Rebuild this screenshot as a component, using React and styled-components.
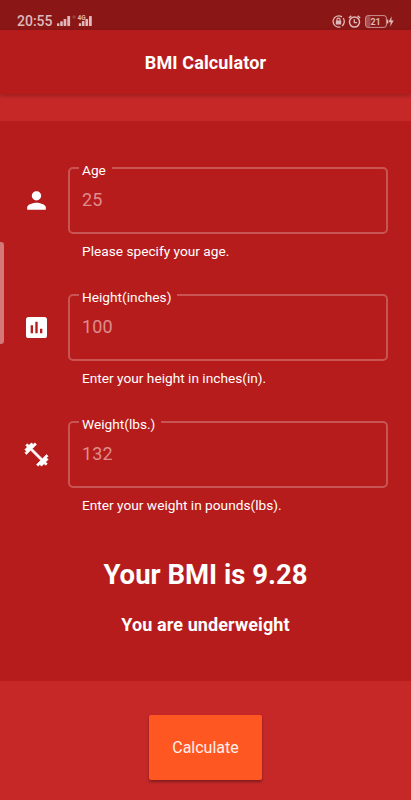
import React from 'react'
import styled, { createGlobalStyle } from 'styled-components'
import { MdPerson, MdAssessment } from 'react-icons/md'

const GlobalStyle = createGlobalStyle`
    * {
        box-sizing: border-box;
    }

    body {
        margin: 0;
        background: #c62828;
        color: #fff;
        font-family: Roboto, sans-serif;
    }
`

const Screen = styled.div`
    position: relative;
    display: flex;
    flex-direction: column;
    width: 411px;
    height: 800px;
    overflow: hidden;
    background: #c62828;
`

const StatusBar = styled.div`
    display: flex;
    justify-content: space-between;
    height: 30px;
    padding: 12px 16px 0 17px;
    background: #8a1616;
    color: #dfb9b9;
`

const StatusGroup = styled.div`
    display: flex;
    align-items: center;
    height: 18px;
`

const Clock = styled.span`
    width: 40px;
    font-size: 14px;
    font-weight: 500;
    line-height: 18px;
`

const AppBar = styled.header`
    display: flex;
    flex: none;
    align-items: center;
    justify-content: center;
    height: 64px;
    padding-top: 1px;
    background: #b71c1c;
    box-shadow: 0 2px 4px rgba(0, 0, 0, 0.22);
`

const Title = styled.h1`
    margin: 0;
    font-size: 18px;
    font-weight: 700;
    line-height: 25px;
    letter-spacing: 0.13px;
`

const Panel = styled.main`
    display: flex;
    flex: none;
    flex-direction: column;
    height: 560px;
    margin-top: 27px;
    padding: 38px 23px 0 0;
    background: #b71c1c;
`

const Row = styled.div`
    display: flex;
    height: 127px;
`

const RowIcon = styled.div`
    display: flex;
    flex: none;
    justify-content: center;
    width: 68px;
    padding: 27px 0 0 4px;

    svg {
        transform: translate(0.5px, 0.5px);
    }
`

const Field = styled.div`
    flex: 1;
`

const Outline = styled.fieldset`
    height: 75px;
    margin: 0;
    padding: 0 12px;
    border: 2px solid #c95454;
    border-radius: 5px;
`

const Label = styled.legend`
    height: 17px;
    margin-left: -3px;
    padding: 0 6px 0 3px;
    font-size: 13.7px;
    line-height: 22px;
`

const Value = styled.div`
    font-size: 18px;
    line-height: 22px;
    margin-top: 13px;
    letter-spacing: 0.1px;
    color: #de8d8d;
`

const Helper = styled.div`
    margin: 8px 0 0 14px;
    font-size: 13.7px;
    line-height: 18px;
`

const Result = styled.h2`
    margin: 18px -23px 0 0;
    font-size: 27.5px;
    font-weight: 700;
    line-height: 34px;
    text-align: center;
`

const Verdict = styled.p`
    margin: 21px -23px 0 0;
    font-size: 18px;
    font-weight: 700;
    line-height: 24px;
    letter-spacing: 0.1px;
    text-align: center;
`

const Footer = styled.footer`
    display: flex;
    justify-content: center;
    padding-top: 34px;
`

const Button = styled.button`
    width: 113px;
    height: 65px;
    padding: 0;
    border: 0;
    border-radius: 2px;
    background: #ff5722;
    box-shadow: 0 2px 3px rgba(0, 0, 0, 0.35);
    color: #fff0eb;
    font-family: inherit;
    font-size: 16px;
`

// edge panel handle, floats above the app
const EdgeHandle = styled.div`
    position: absolute;
    top: 242px;
    left: 0;
    width: 4px;
    height: 102px;
    border-radius: 0 3px 3px 0;
    background: #d47878;
`

const SignalIcons = () => (
    <svg width="36" height="18" viewBox="0 0 36 18" fill="currentColor">
        <rect x="0" y="11.2" width="2.4" height="2.8" rx="0.6" />
        <rect x="3.2" y="9.3" width="2.6" height="4.7" rx="0.6" />
        <rect x="6.6" y="7" width="2.7" height="7" rx="0.6" />
        <rect x="10.3" y="4" width="2.8" height="10" rx="0.6" />
        <circle cx="17" cy="5" r="1.7" opacity="0.25" />
        <text x="20.5" y="7.6" fontSize="6.5" fontWeight="700">4G</text>
        <rect x="21.8" y="11.2" width="2.4" height="2.8" rx="0.6" />
        <rect x="24.9" y="9" width="2.6" height="5" rx="0.6" />
        <rect x="28.4" y="7" width="2.7" height="7" rx="0.6" />
        <rect x="32" y="4" width="2.8" height="10" rx="0.6" />
    </svg>
)

const RotationLockIcon = () => (
    <svg width="13" height="13" viewBox="0 0 13 13" fill="none" stroke="currentColor">
        <path d="M10 1.9A5.6 5.6 0 1 0 8.3 11.8M11.2 3.2A5.6 5.6 0 0 1 10 11" strokeWidth="1.3" />
        <path d="M4.9 6V4.7a1.6 1.6 0 0 1 3.2 0V6" strokeWidth="1.1" />
        <rect x="3.8" y="5.5" width="5.4" height="4" rx="0.5" fill="currentColor" stroke="none" />
    </svg>
)

const AlarmIcon = () => (
    <svg width="13" height="13" viewBox="0 0 13 13" fill="none" stroke="currentColor">
        <circle cx="6.5" cy="7.1" r="5" strokeWidth="1.5" />
        <path d="M6.3 4.3v3.3h2.7" strokeWidth="1.3" />
        <path d="M0.9 3L3.3 0.9M12.1 3L9.7 0.9" strokeWidth="1.5" />
    </svg>
)

const BatteryIcon = () => (
    <svg width="31" height="13" viewBox="-1 0 31 13" fill="currentColor">
        <rect x="1" y="1" width="4.5" height="11" rx="2" opacity="0.35" />
        <rect x="0.6" y="0.6" width="20.8" height="11.8" rx="2.4" fill="none" stroke="currentColor" strokeOpacity="0.75" />
        <rect x="21.9" y="4.6" width="1.4" height="3.8" rx="0.5" />
        <text x="5.4" y="9.8" fontSize="9" fontWeight="700">21</text>
        <path d="M26.6 1.3L23.5 7.2h2.2l-.5 4.6 3.5-6.2h-2.3z" />
    </svg>
)

const DumbbellIcon = ({ size }) => (
    <svg width={size} height={size} viewBox="0 0 24 24" fill="currentColor">
        <path d="M20.57 14.86L22 13.43 20.57 12 17 15.57 8.43 7 12 3.43 10.57 2 9.14 3.43 7.71 2 5.57 4.14 4.14 2.71 2.71 4.14l1.43 1.43L2 7.71l1.43 1.43L2 10.57 3.43 12 7 8.43 15.57 17 12 20.57 13.43 22l1.43-1.43L16.29 22l2.14-2.14 1.43 1.43 1.43-1.43-1.43-1.43L22 16.29z" stroke="currentColor" strokeWidth="0.5" strokeLinejoin="round" />
    </svg>
)

const StatusIcons = styled(StatusGroup)`
    gap: 3px;
`

const fields = [
    { icon: MdPerson, label: 'Age', value: '25', helper: 'Please specify your age.' },
    { icon: MdAssessment, label: 'Height(inches)', value: '100', helper: 'Enter your height in inches(in).' },
    { icon: DumbbellIcon, label: 'Weight(lbs.)', value: '132', helper: 'Enter your weight in pounds(lbs).' },
]

const FormRow = ({ icon: Icon, label, value, helper }) => (
    <Row>
        <RowIcon>
            <Icon size={28} />
        </RowIcon>
        <Field>
            <Outline>
                <Label>{label}</Label>
                <Value>{value}</Value>
            </Outline>
            <Helper>{helper}</Helper>
        </Field>
    </Row>
)

class App extends React.Component {
    render() {
        return (
            <Screen>
                <GlobalStyle />
                <StatusBar>
                    <StatusGroup>
                        <Clock>20:55</Clock>
                        <SignalIcons />
                    </StatusGroup>
                    <StatusIcons>
                        <RotationLockIcon />
                        <AlarmIcon />
                        <BatteryIcon />
                    </StatusIcons>
                </StatusBar>
                <AppBar>
                    <Title>BMI Calculator</Title>
                </AppBar>
                <Panel>
                    {fields.map(field => (
                        <FormRow key={field.label} {...field} />
                    ))}
                    <Result>Your BMI is 9.28</Result>
                    <Verdict>You are underweight</Verdict>
                </Panel>
                <Footer>
                    <Button>Calculate</Button>
                </Footer>
                <EdgeHandle />
            </Screen>
        )
    }
}

export default App
